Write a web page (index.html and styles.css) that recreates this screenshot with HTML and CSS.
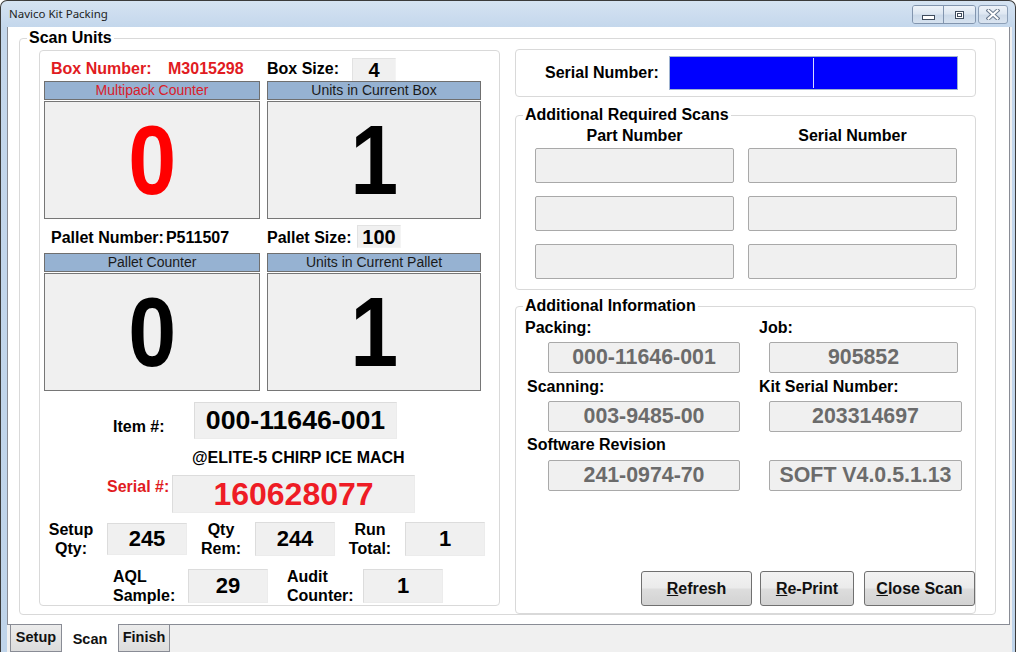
FILE: index.html
```html
<!DOCTYPE html>
<html>
<head>
<meta charset="utf-8">
<title>Navico Kit Packing</title>
<link rel="stylesheet" href="styles.css">
</head>
<body>
<div class="window">
  <div class="titlebar">
    <span class="title">Navico Kit Packing</span>
    <div class="caption">
      <div class="cgroup">
        <span class="cbtn cmin"><svg width="13" height="5" viewBox="0 0 13 5"><rect x="0.5" y="0.5" width="12" height="4" fill="#ffffff" stroke="#3e4b5c"/></svg></span>
        <span class="cbtn cmax"><svg width="9" height="8" viewBox="0 0 9 8"><rect x="0.5" y="0.5" width="8" height="7" fill="#ffffff" stroke="#3e4b5c"/><rect x="2.5" y="2.5" width="4" height="3" fill="none" stroke="#3e4b5c"/></svg></span>
      </div>
      <span class="cbtn cclose"><svg width="14" height="11" viewBox="0 0 14 11"><path d="M2.5 1.5 L11.5 9.5 M11.5 1.5 L2.5 9.5" stroke="#6a7a8e" stroke-width="4" stroke-linecap="square"/><path d="M2.5 1.5 L11.5 9.5 M11.5 1.5 L2.5 9.5" stroke="#ffffff" stroke-width="2" stroke-linecap="square"/></svg></span>
    </div>
  </div>
  <div class="client">
    <div class="tabpage">
      <fieldset class="group scan-units">
        <legend>Scan Units</legend>
        <div class="scan-body">
          <div class="left-panel">
            <div class="box-row">
              <span class="lbl red w117">Box Number:</span>
              <span class="lbl red w99">M3015298</span>
              <span class="lbl w85">Box Size:</span>
              <span class="sfield">4</span>
            </div>
            <div class="counters">
              <div class="chead red-head">Multipack Counter</div>
              <div class="chead">Units in Current Box</div>
              <div class="cbox big-red"><span class="digit">0</span></div>
              <div class="cbox"><span class="digit">1</span></div>
            </div>
            <div class="pallet-row">
              <span class="lbl w216">Pallet Number:<span class="pval">P511507</span></span>
              <span class="lbl w90">Pallet Size:</span>
              <span class="sfield">100</span>
            </div>
            <div class="counters">
              <div class="chead">Pallet Counter</div>
              <div class="chead">Units in Current Pallet</div>
              <div class="cbox"><span class="digit">0</span></div>
              <div class="cbox"><span class="digit">1</span></div>
            </div>
            <div class="item-row">
              <span class="lbl item-lbl">Item #:</span>
              <span class="vfield item-field">000-11646-001</span>
            </div>
            <div class="desc">@ELITE-5 CHIRP ICE MACH</div>
            <div class="serial-row">
              <span class="lbl red serial-lbl">Serial #:</span>
              <span class="vfield serial-field">160628077</span>
            </div>
            <div class="qty-row">
              <span class="ml setup-lbl">Setup<br>Qty:</span>
              <span class="vfield qfield q245">245</span>
              <span class="ml rem-lbl">Qty<br>Rem:</span>
              <span class="vfield qfield">244</span>
              <span class="ml run-lbl">Run<br>Total:</span>
              <span class="vfield qfield">1</span>
            </div>
            <div class="aql-row">
              <span class="ml left aql-lbl">AQL<br>Sample:</span>
              <span class="vfield qfield">29</span>
              <span class="ml left audit-lbl">Audit<br>Counter:</span>
              <span class="vfield qfield">1</span>
            </div>
          </div>
          <div class="right-col">
            <div class="sn-panel">
              <span class="lbl sn-lbl">Serial Number:</span>
              <span class="sn-field"><span class="caret"></span></span>
            </div>
            <fieldset class="group ars">
              <legend>Additional Required Scans</legend>
              <div class="ars-inner">
                <div class="ars-heads">
                  <div class="colhead">Part Number</div>
                  <div class="colhead">Serial Number</div>
                </div>
                <div class="ars-grid">
                  <div class="efield"></div>
                  <div class="efield"></div>
                  <div class="efield"></div>
                  <div class="efield"></div>
                  <div class="efield"></div>
                  <div class="efield"></div>
                </div>
              </div>
            </fieldset>
            <fieldset class="group ai">
              <legend>Additional Information</legend>
              <div class="ai-inner">
                <div class="info-labels first">
                  <span class="il">Packing:</span>
                  <span class="ir">Job:</span>
                </div>
                <div class="info-fields">
                  <span class="ifield fl">000-11646-001</span>
                  <span class="ifield fr w189">905852</span>
                </div>
                <div class="info-labels">
                  <span class="il shift">Scanning:</span>
                  <span class="ir">Kit Serial Number:</span>
                </div>
                <div class="info-fields">
                  <span class="ifield fl">003-9485-00</span>
                  <span class="ifield fr">203314697</span>
                </div>
                <div class="info-labels third">
                  <span class="il shift">Software Revision</span>
                  <span class="ir"></span>
                </div>
                <div class="info-fields last">
                  <span class="ifield fl">241-0974-70</span>
                  <span class="ifield fr">SOFT V4.0.5.1.13</span>
                </div>
                <div class="buttons">
                  <span class="btn b-refresh"><u>R</u>efresh</span>
                  <span class="btn b-reprint"><u>R</u>e-Print</span>
                  <span class="btn b-close"><u>C</u>lose Scan</span>
                </div>
              </div>
            </fieldset>
          </div>
        </div>
      </fieldset>
    </div>
    <div class="tabstrip">
      <span class="tab">Setup</span>
      <span class="tab active">Scan</span>
      <span class="tab last-tab">Finish</span>
    </div>
  </div>
</div>
</body>
</html>
```

FILE: styles.css
```css
* { box-sizing: border-box; }

body {
  margin: 0;
  width: 1018px;
  height: 652px;
  overflow: hidden;
  background: #ffffff;
  font-family: "Liberation Sans", Arial, sans-serif;
  color: #000;
}

.window {
  width: 1016px;
  height: 652px;
  border: 1px solid #3b3b3b;
  border-bottom: 0;
  border-radius: 7px 7px 0 0;
  background: linear-gradient(#d5e3f2, #c4d7ec 26px, #bfd4ea);
  display: flex;
  flex-direction: column;
  padding: 0 3px 0 6px;
}

.titlebar {
  height: 26px;
  flex-shrink: 0;
  display: flex;
  align-items: flex-start;
  padding-left: 2px;
}

.title {
  font-family: "Noto Sans", "Liberation Sans", sans-serif;
  font-size: 11.5px;
  line-height: 16px;
  margin-top: 5px;
  color: #1e1e1e;
}

.caption {
  margin-left: auto;
  margin-right: 4px;
  margin-top: 4px;
  display: flex;
  gap: 2px;
}

.cgroup {
  display: flex;
  border: 1px solid #8295ae;
  border-radius: 3px;
  overflow: hidden;
}

.cbtn {
  width: 31px;
  height: 17px;
  display: flex;
  justify-content: center;
  align-items: center;
  background: linear-gradient(#eef3f9, #dce6f1 45%, #cbd9e9 55%, #d6e2ef);
}

.cmin {
  border-right: 1px solid #8295ae;
  align-items: flex-end;
  padding-bottom: 3px;
}

.cclose {
  width: 30px;
  height: 19px;
  border: 1px solid #8da0b8;
  border-radius: 3px;
  background: linear-gradient(#eef3f9, #dfe8f2 45%, #d0dcea 55%, #dae4f0);
}

.client {
  flex: 1;
  display: flex;
  flex-direction: column;
  background: #f0f0f0;
}

.tabpage {
  height: 598px;
  flex-shrink: 0;
  margin-right: 2px;
  background: #ffffff;
  border: 1px solid #898c95;
  border-top: 0;
  padding-top: 2px;
}

.group {
  margin: 0;
  padding: 0;
  min-width: 0;
  border: 1px solid #d9d9d9;
  border-radius: 4px;
}

.group legend {
  padding: 0 2px;
  margin-left: 7px;
  font-size: 16px;
  font-weight: bold;
  line-height: 18px;
}

.scan-units {
  margin: 0 13px 0 11px;
}

.scan-body {
  display: flex;
  gap: 15px;
  height: 567px;
  padding: 2px 19px 0 19px;
}

/* ---------- left panel ---------- */
.left-panel {
  width: 461px;
  height: 556px;
  margin-top: 1px;
  border: 1px solid #d9d9d9;
  border-radius: 4px;
  display: flex;
  flex-direction: column;
}

.left-panel > * { flex-shrink: 0; }

.lbl {
  font-size: 16px;
  font-weight: bold;
  white-space: nowrap;
}

.red { color: #e11b22; }
.w117 { width: 117px; }
.w99 { width: 99px; }
.w85 { width: 85px; }
.w216 { width: 216px; }
.w90 { width: 90px; }

.pval { margin-left: 2px; }

.box-row {
  height: 30px;
  display: flex;
  align-items: flex-end;
  padding-left: 11px;
}

.box-row .lbl {
  line-height: 23px;
  margin-bottom: 1px;
}

.sfield {
  width: 44px;
  height: 23px;
  background: #f0f0f0;
  border: 1px solid #e2e2e2;
  border-right-color: #f4f4f4;
  border-bottom-color: #f4f4f4;
  text-align: center;
  font-size: 20px;
  font-weight: bold;
  line-height: 23px;
}

.counters {
  display: grid;
  grid-template-columns: 216px 214px;
  grid-template-rows: 19px 118px;
  column-gap: 7px;
  row-gap: 1px;
  margin-left: 4px;
}

.chead {
  background: #96b2d2;
  border: 1px solid #6f6f6f;
  font-size: 14px;
  line-height: 17px;
  text-align: center;
  color: #1a1a1a;
}

.red-head { color: #d9202a; }

.cbox {
  background: #f0f0f0;
  border: 1px solid #767676;
  display: flex;
  justify-content: center;
  align-items: center;
}

.digit {
  display: block;
  font-size: 98px;
  font-weight: bold;
  line-height: 1;
  transform: scaleX(0.88);
}

.big-red { color: #ff0000; }

.pallet-row {
  height: 34px;
  display: flex;
  align-items: flex-start;
  padding: 6px 0 0 11px;
}

.pallet-row .lbl {
  line-height: 26px;
}

.item-row {
  margin-top: 11px;
  display: flex;
  align-items: flex-end;
  padding-left: 73px;
}

.item-lbl {
  width: 81px;
  line-height: 20px;
  margin-bottom: 2px;
}

.vfield {
  background: #f0f0f0;
  border: 1px solid #dcdcdc;
  border-right-color: #ececec;
  border-bottom-color: #ececec;
  display: flex;
  justify-content: center;
  align-items: center;
  font-weight: bold;
}

.item-field {
  width: 203px;
  height: 37px;
  font-size: 26.67px;
}

.desc {
  margin-top: 9px;
  padding-left: 152px;
  font-size: 16px;
  font-weight: bold;
  line-height: 20px;
}

.serial-row {
  margin-top: 7px;
  display: flex;
  align-items: flex-start;
  padding-left: 67px;
}

.serial-lbl {
  width: 65px;
  margin-top: 2px;
  line-height: 20px;
}

.serial-field {
  width: 243px;
  height: 38px;
  font-size: 32px;
  color: #ee1c25;
}

.qty-row {
  margin-top: 9px;
  height: 34px;
  display: flex;
  align-items: center;
  padding-left: 3px;
}

.ml {
  font-size: 16px;
  font-weight: bold;
  line-height: 19px;
  text-align: center;
}

.ml.left { text-align: left; }

.setup-lbl { width: 56px; margin-right: 8px; }
.rem-lbl { width: 68px; }
.run-lbl { width: 70px; }

.qfield {
  width: 80px;
  height: 34px;
  font-size: 22px;
}

.q245 { height: 32px; }

.aql-row {
  margin-top: 13px;
  height: 34px;
  display: flex;
  align-items: center;
  padding-left: 73px;
}

.aql-lbl { width: 75px; }
.audit-lbl { width: 76px; margin-left: 19px; }

/* ---------- right column ---------- */
.right-col {
  width: 461px;
  display: flex;
  flex-direction: column;
}

.right-col > * { flex-shrink: 0; }

.sn-panel {
  height: 48px;
  border: 1px solid #d9d9d9;
  border-radius: 4px;
  display: flex;
  align-items: center;
  padding-left: 29px;
}

.sn-lbl { width: 124px; }

.sn-field {
  width: 289px;
  height: 34px;
  background: #0000ff;
  border: 1px solid #9fb3d0;
  display: flex;
  align-items: center;
}

.caret {
  margin-left: 143px;
  width: 1px;
  height: 30px;
  background: #d8d8ff;
}

.ars { margin-top: 9px; }

.ars-inner {
  padding: 3px 0 10px 19px;
}

.ars-heads {
  display: grid;
  grid-template-columns: 199px 209px;
  column-gap: 14px;
  height: 18px;
  margin-bottom: 3px;
}

.ars-grid {
  display: grid;
  grid-template-columns: 199px 209px;
  grid-template-rows: 35px 35px 35px;
  column-gap: 14px;
  row-gap: 13px;
}

.colhead {
  font-size: 16px;
  font-weight: bold;
  line-height: 18px;
  text-align: center;
}

.efield {
  background: #f0f0f0;
  border: 1px solid #a9a9a9;
  border-radius: 2px;
}

.ai { margin-top: 7px; }

.ai-inner {
  height: 298px;
  padding: 4px 0 7px 0;
  display: flex;
  flex-direction: column;
}

.info-labels {
  display: grid;
  grid-template-columns: 243px 1fr;
  height: 18px;
  font-size: 16px;
  font-weight: bold;
  line-height: 18px;
  margin-top: 5px;
}

.info-labels.first { margin-top: 0; }
.info-labels.third { margin-top: 4px; }

.il { padding-left: 9px; }
.il.shift { padding-left: 11px; }

.info-fields {
  display: grid;
  grid-template-columns: 243px 1fr;
  height: 31px;
  margin-top: 5px;
}

.info-fields.last { margin-top: 6px; }

.ifield {
  height: 31px;
  background: #f0f0f0;
  border: 1px solid #a9a9a9;
  border-radius: 2px;
  display: flex;
  justify-content: center;
  align-items: center;
  font-size: 21.33px;
  font-weight: bold;
  color: #6b6b6b;
  white-space: nowrap;
}

.fl { margin-left: 32px; width: 192px; }
.fr { margin-left: 10px; width: 193px; }
.fr.w189 { width: 189px; }

.buttons {
  margin-top: auto;
  display: flex;
  justify-content: flex-end;
}

.btn {
  height: 35px;
  border: 1px solid #707070;
  border-radius: 3px;
  background: linear-gradient(#f3f3f3, #ebebeb 48%, #dddddd 52%, #d2d2d2);
  display: flex;
  justify-content: center;
  align-items: center;
  font-size: 16px;
  font-weight: bold;
  color: #111;
}

.b-refresh { width: 111px; }
.b-reprint { width: 94px; margin-left: 8px; }
.b-close { width: 111px; margin-left: 10px; }

/* ---------- tabs ---------- */
.tabstrip {
  height: 27px;
  flex-shrink: 0;
  display: flex;
  align-items: flex-start;
  padding-left: 3px;
}

.tab {
  width: 52px;
  height: 27px;
  border: 1px solid #898c95;
  border-top: 0;
  background: linear-gradient(#ececec, #dcdcdc);
  font-size: 14.5px;
  font-weight: bold;
  line-height: 24px;
  text-align: center;
  color: #111;
}

.tab.active {
  width: 58px;
  height: 28px;
  margin-top: -1px;
  margin-left: -1px;
  background: #ffffff;
  border-bottom: 0;
  padding-top: 4px;
  line-height: 22px;
}

.tab.last-tab { margin-left: -1px; }
```
